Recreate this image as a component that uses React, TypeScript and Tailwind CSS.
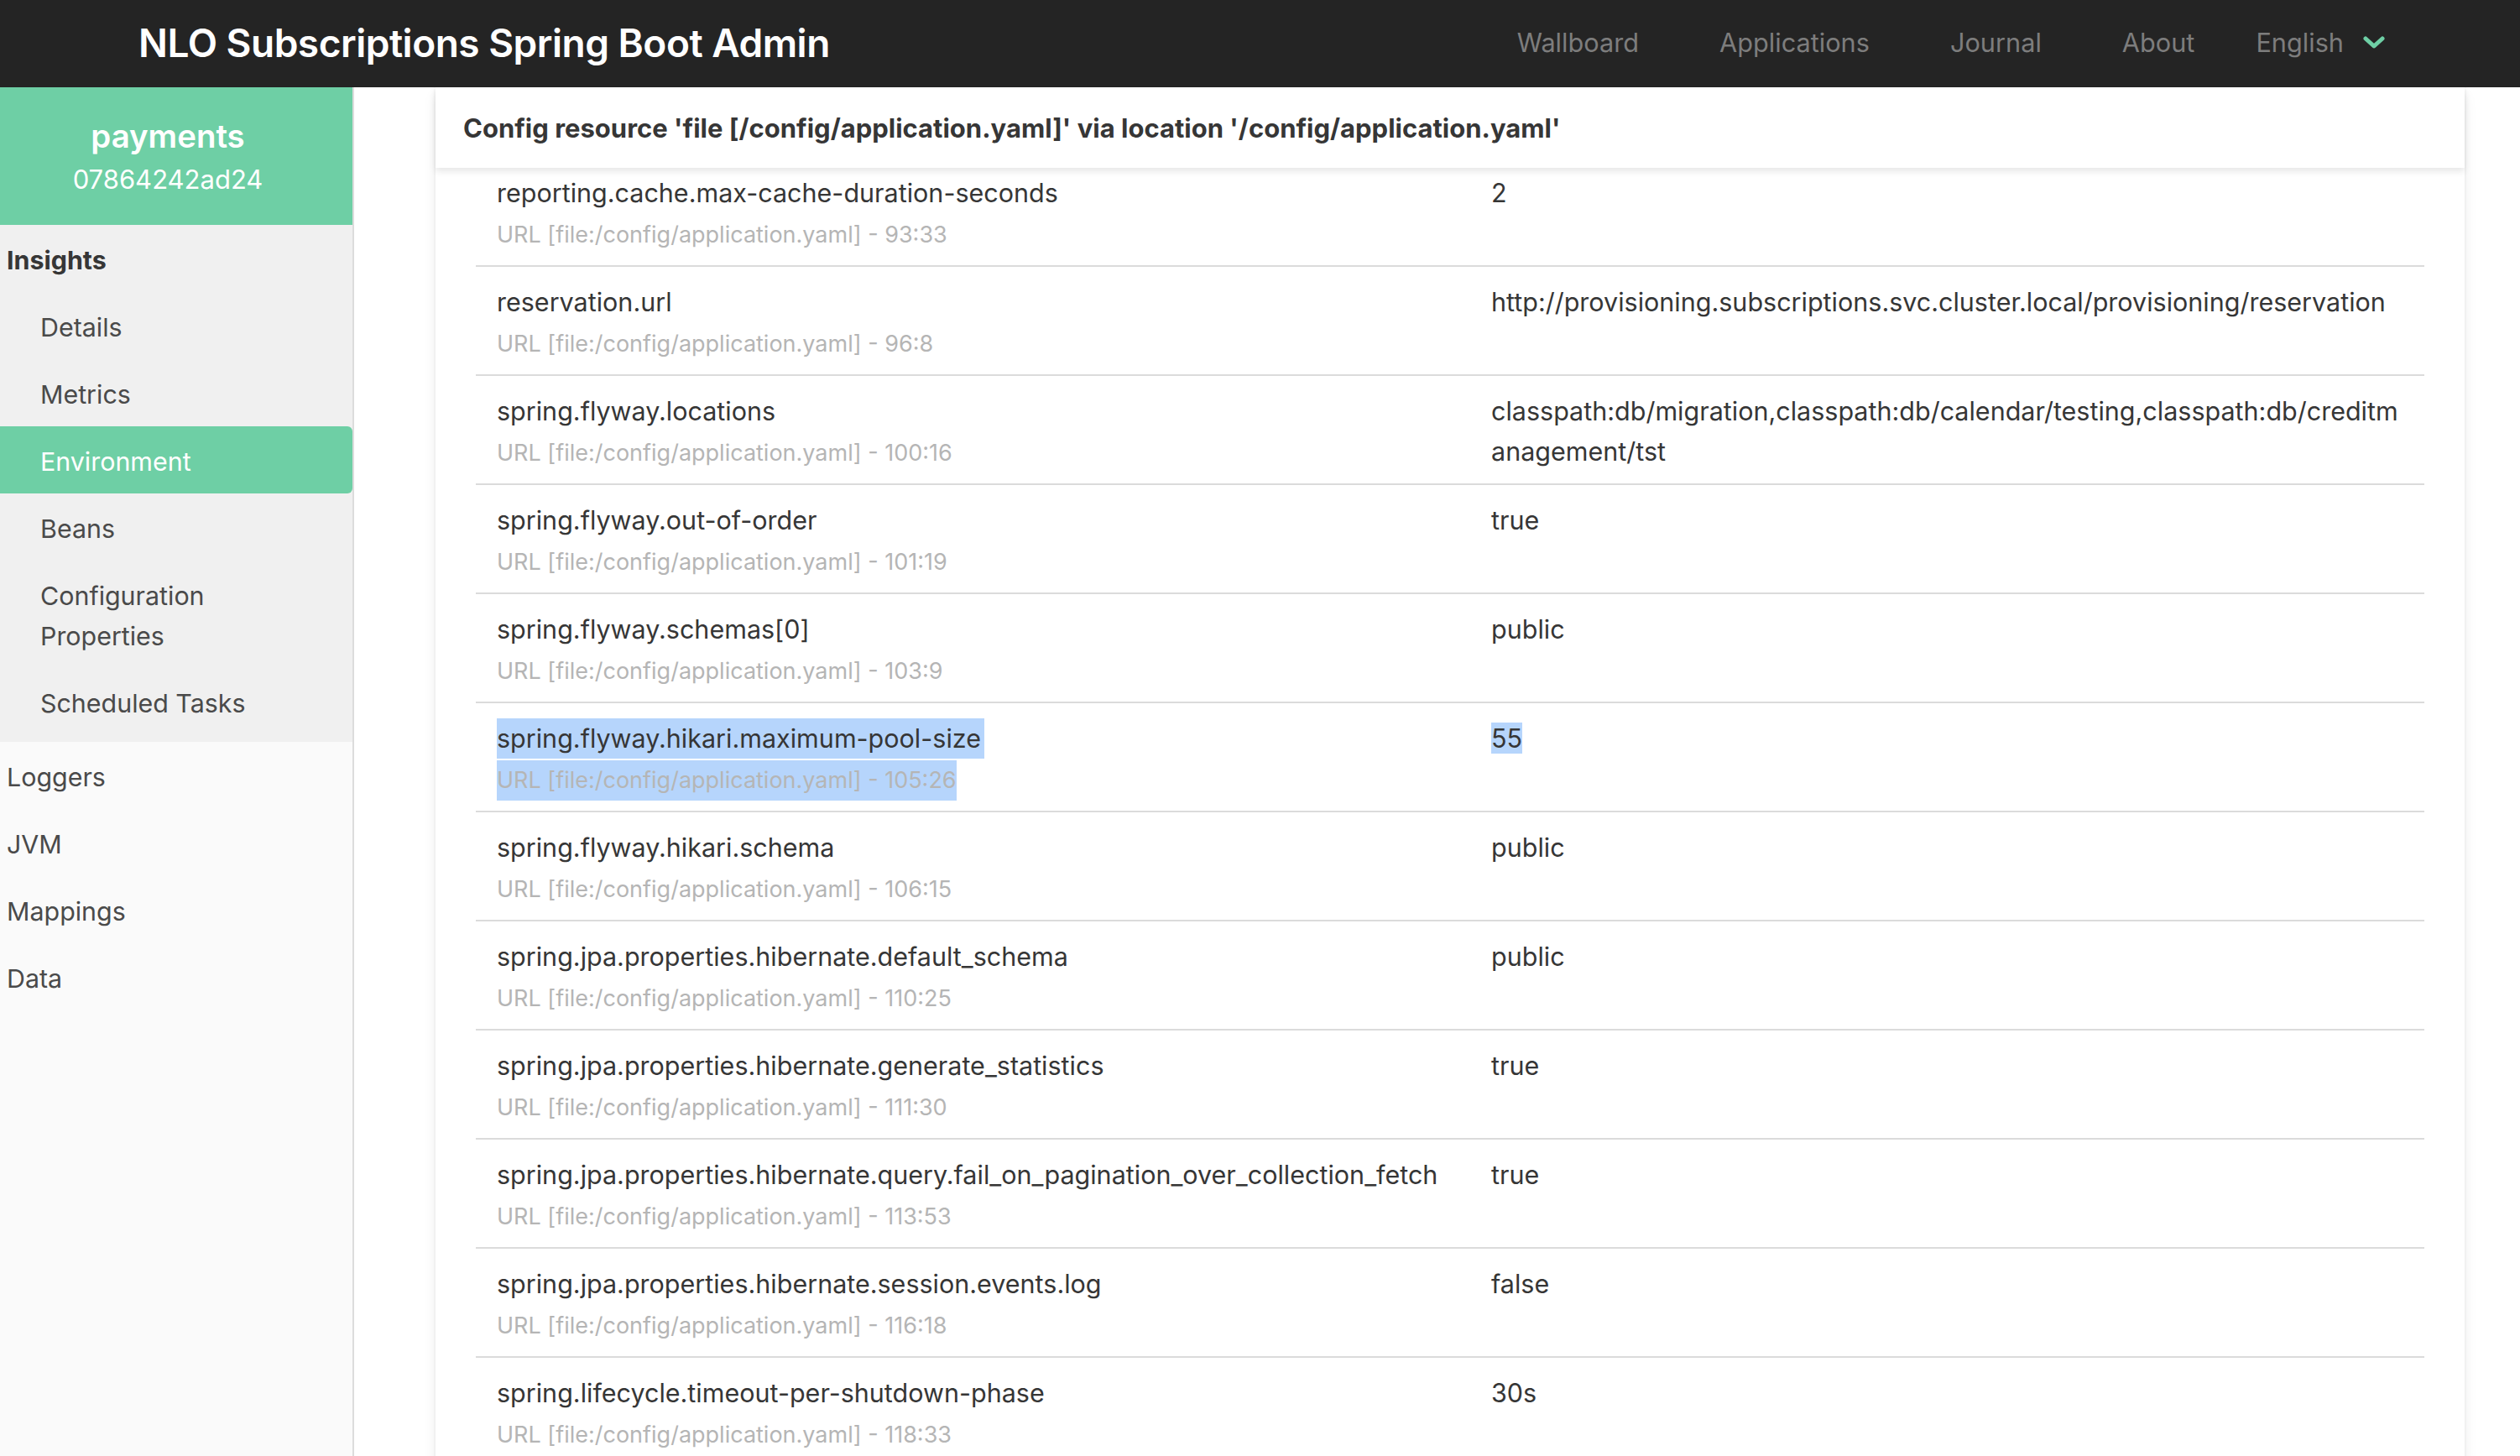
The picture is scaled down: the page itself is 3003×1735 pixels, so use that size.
import React from "react";

type Prop = {
	name: string;
	value: string;
	origin: string;
	selected?: boolean;
};

const properties: Prop[] = [
	{ name: "reporting.cache.max-cache-duration-seconds", value: "2", origin: "93:33" },
	{
		name: "reservation.url",
		value: "http://provisioning.subscriptions.svc.cluster.local/provisioning/reservation",
		origin: "96:8",
	},
	{
		name: "spring.flyway.locations",
		value: "classpath:db/migration,classpath:db/calendar/testing,classpath:db/creditmanagement/tst",
		origin: "100:16",
	},
	{ name: "spring.flyway.out-of-order", value: "true", origin: "101:19" },
	{ name: "spring.flyway.schemas[0]", value: "public", origin: "103:9" },
	{ name: "spring.flyway.hikari.maximum-pool-size", value: "55", origin: "105:26", selected: true },
	{ name: "spring.flyway.hikari.schema", value: "public", origin: "106:15" },
	{ name: "spring.jpa.properties.hibernate.default_schema", value: "public", origin: "110:25" },
	{ name: "spring.jpa.properties.hibernate.generate_statistics", value: "true", origin: "111:30" },
	{
		name: "spring.jpa.properties.hibernate.query.fail_on_pagination_over_collection_fetch",
		value: "true",
		origin: "113:53",
	},
	{ name: "spring.jpa.properties.hibernate.session.events.log", value: "false", origin: "116:18" },
	{ name: "spring.lifecycle.timeout-per-shutdown-phase", value: "30s", origin: "118:33" },
];

const insights = ["Details", "Metrics", "Environment", "Beans", "Configuration Properties", "Scheduled Tasks"];
const others = ["Loggers", "JVM", "Mappings", "Data"];

function NavBar() {
	const links = ["Wallboard", "Applications", "Journal", "About"];
	return (
		<nav className="h-[104px] shrink-0 bg-[#242424] flex items-center">
			<div className="pl-[165px] pb-[2px] text-[46px] font-semibold text-white tracking-[-0.5px]">
				NLO Subscriptions Spring Boot Admin
			</div>
			<div className="ml-auto flex items-center pr-[161px] pb-[2px] text-[30.7px] text-[#7d7d7d]">
				{links.map((l) => (
					<a key={l} className="px-[48px]">
						{l}
					</a>
				))}
				<div className="flex items-center gap-[23px] pl-[25px]">
					<span>English</span>
					<svg width="26" height="18" viewBox="0 0 26 18" fill="none">
						<path d="M3 4 L13 13 L23 4" stroke="#6ecfa5" strokeWidth="5" strokeLinecap="round" strokeLinejoin="round" />
					</svg>
				</div>
			</div>
		</nav>
	);
}

function Sidebar() {
	return (
		<aside className="w-[422px] shrink-0 bg-[#fafafa] border-r-2 border-[#dcdcdc] text-[30.4px] text-[#4a4a4a]">
			<div className="h-[164px] pt-[4px] pr-[20px] bg-[#6ecfa5] flex flex-col items-center justify-center text-white">
				<div className="text-[38.4px] font-semibold leading-[52px]">payments</div>
				<div className="text-[31px] leading-[52px]">07864242ad24</div>
			</div>
			<div className="bg-[#f0f0f0] pb-2">
				<div className="pt-[18px] pb-[14px] pl-[8px] leading-[48px] font-bold text-[#363636]">Insights</div>
				{insights.map((item) => (
					<div
						key={item}
						className={
							item === "Environment"
								? "pt-[18px] pb-[14px] pl-[48px] pr-[60px] leading-[48px] bg-[#6ecfa5] text-white rounded-r-[6px]"
								: "pt-[18px] pb-[14px] pl-[48px] pr-[60px] leading-[48px]"
						}
					>
						{item}
					</div>
				))}
			</div>
			{others.map((item) => (
				<div key={item} className="pt-[18px] pb-[14px] pl-[8px] leading-[48px]">
					{item}
				</div>
			))}
		</aside>
	);
}

function PropertyRow({ prop, first }: { prop: Prop; first: boolean }) {
	const hl = prop.selected ? "bg-[#b6d5fc]" : "";
	return (
		<div
			className={`grid grid-cols-[1186px_1fr] border-b-2 border-[#dbdbdb] pb-[12px] ${first ? "pt-[6px]" : "pt-[18px]"}`}
		>
			<div className="px-[25px]">
				<div className="leading-[48px] text-[#363636]">
					<span className={`inline-block pr-[4px] ${hl}`}>{prop.name}</span>
				</div>
				<div className="mt-[2px] leading-[48px] text-[27px] text-[#b5b5b5]">
					<span className={`inline-block ${hl}`}>URL [file:/config/application.yaml] - {prop.origin}</span>
				</div>
			</div>
			<div className="pl-[24px] pr-[20px] leading-[48px] text-[#363636] break-all">
				<span className={hl}>{prop.value}</span>
			</div>
		</div>
	);
}

export default function App() {
	return (
		<div
			className="w-[3003px] h-[1735px] overflow-hidden flex flex-col bg-white"
			style={{ fontFamily: "Inter, 'Noto Sans', sans-serif" }}
		>
			<NavBar />
			<div className="flex flex-1 min-h-0">
				<Sidebar />
				<main className="flex-1 min-w-0 pl-[97px] pr-[66px] overflow-hidden">
					<div className="bg-white shadow-[0_8px_16px_-2px_rgba(10,10,10,0.1),0_0_0_2px_rgba(10,10,10,0.02)] min-h-full">
						<div className="relative z-10 h-[96px] flex items-center pl-[33px] pt-[2px] text-[31px] font-bold text-[#363636] shadow-[0_4px_8px_rgba(10,10,10,0.1)]">
							Config resource 'file [/config/application.yaml]' via location '/config/application.yaml'
						</div>
						<div className="mx-[48px] text-[30.5px]">
							{properties.map((p, i) => (
								<PropertyRow key={p.name} prop={p} first={i === 0} />
							))}
						</div>
					</div>
				</main>
			</div>
		</div>
	);
}
